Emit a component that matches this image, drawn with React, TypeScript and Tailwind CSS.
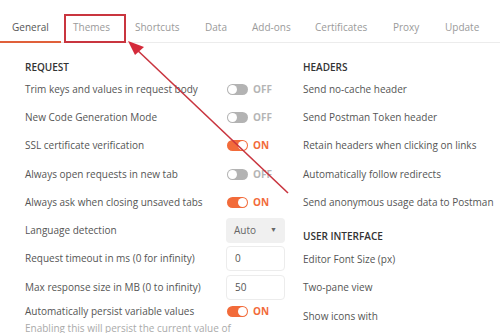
import React from "react";

const tabs: [string, string][] = [
  ["General", "w-[61px]"],
  ["Themes", "w-[62px]"],
  ["Shortcuts", "w-[70px]"],
  ["Data", "w-[47px]"],
  ["Add-ons", "w-[63px]"],
  ["Certificates", "w-[78px]"],
  ["Proxy", "w-[52px]"],
  ["Update", "w-[67px]"],
];

function Toggle({ on }: { on: boolean }) {
  return (
    <div className="flex items-center gap-[5px] pl-px">
      <div
        className={
          on
            ? "w-[21px] h-[11px] rounded-full bg-[#f26b3a] flex items-center justify-end pr-px"
            : "w-[21px] h-[11px] rounded-full bg-[#b3b3b3] flex items-center justify-start pl-px"
        }
      >
        <div className="w-[9px] h-[9px] rounded-full bg-white" />
      </div>
      <span
        className={
          on
            ? "text-[10px] font-bold text-[#f26b3a]"
            : "text-[10px] font-bold text-[#b5b5b5]"
        }
      >
        {on ? "ON" : "OFF"}
      </span>
    </div>
  );
}

function Row({
  label,
  children,
  h = "h-[28.3px]",
}: {
  label: string;
  children?: React.ReactNode;
  h?: string;
}) {
  return (
    <div className={`flex items-center ${h}`}>
      <span className="flex-1 whitespace-nowrap text-[10px] text-[#555]">{label}</span>
      <div className="w-[59px] shrink-0 flex items-center">{children}</div>
    </div>
  );
}

function Heading({ children }: { children: React.ReactNode }) {
  return (
    <div className="h-[15px] flex items-center text-[10px] font-semibold text-[#333]">
      {children}
    </div>
  );
}

export default function App() {
  return (
    <div
      className="relative w-[500px] h-[333px] overflow-hidden bg-white"
      style={{ fontFamily: '"Open Sans", sans-serif' }}
    >
      <div className="flex h-[43px] border-b border-[#ececec]">
        {tabs.map(([t, w], i) => (
          <div
            key={t}
            className={
              i === 0
                ? `${w} shrink-0 h-[43px] pt-[20px] leading-[14px] pl-[12px] border-b-2 border-[#e0603a] text-[10px] text-[#555] whitespace-nowrap`
                : `${w} shrink-0 h-[43px] pt-[20px] leading-[14px] pl-[12px] text-[10px] text-[#9a9a9a] whitespace-nowrap`
            }
          >
            {t}
          </div>
        ))}
      </div>

      <div className="flex pt-[17px]">
        <div className="w-[285px] shrink-0 pl-[25px] flex flex-col">
          <Heading>REQUEST</Heading>
          <Row label="Trim keys and values in request body">
            <Toggle on={false} />
          </Row>
          <Row label="New Code Generation Mode">
            <Toggle on={false} />
          </Row>
          <Row label="SSL certificate verification">
            <Toggle on={true} />
          </Row>
          <Row label="Always open requests in new tab">
            <Toggle on={false} />
          </Row>
          <Row label="Always ask when closing unsaved tabs">
            <Toggle on={true} />
          </Row>
          <Row label="Language detection">
            <div className="w-[59px] h-[25px] bg-[#f0f0f0] rounded-sm flex items-center justify-between px-[8px] text-[10px] text-[#666]">
              <span>Auto</span>
              <span className="text-[7px] text-[#666]">▼</span>
            </div>
          </Row>
          <Row label="Request timeout in ms (0 for infinity)">
            <div className="w-[59px] h-[25px] border border-[#ececec] rounded-sm flex items-center px-[8px] text-[10px] text-[#555]">
              0
            </div>
          </Row>
          <Row label="Max response size in MB (0 to infinity)">
            <div className="w-[59px] h-[25px] border border-[#ececec] rounded-sm flex items-center px-[8px] text-[10px] text-[#555]">
              50
            </div>
          </Row>
          <Row label="Automatically persist variable values" h="h-[20px]">
            <Toggle on={true} />
          </Row>
          <div className="text-[10px] leading-[14px] text-[#aaa] whitespace-nowrap">
            Enabling this will persist the current value of
          </div>
        </div>

        <div className="pl-[18px] flex flex-col text-[10px] text-[#555] whitespace-nowrap">
          <Heading>HEADERS</Heading>
          <div className="h-[28.3px] flex items-center">Send no-cache header</div>
          <div className="h-[28.3px] flex items-center">Send Postman Token header</div>
          <div className="h-[28.3px] flex items-center">
            Retain headers when clicking on links
          </div>
          <div className="h-[28.3px] flex items-center">Automatically follow redirects</div>
          <div className="h-[28.3px] flex items-center">
            Send anonymous usage data to Postman
          </div>
          <div className="mt-[13px]">
            <Heading>USER INTERFACE</Heading>
          </div>
          <div className="mt-[1px] h-[28.3px] flex items-center">Editor Font Size (px)</div>
          <div className="h-[28.3px] flex items-center">Two-pane view</div>
          <div className="h-[28.3px] flex items-center">Show icons with</div>
        </div>
      </div>

      {/* annotation overlay */}
      <div className="absolute left-[64px] top-[14px] w-[62px] h-[29px] border-2 border-[#c9353f]" />
      <svg className="absolute left-0 top-0" width="500" height="333">
        <line x1="288" y1="193" x2="134" y2="47" stroke="#c9353f" strokeWidth="1.6" />
        <polygon points="128,41 144,47 135,55" fill="#d42a3a" />
      </svg>
    </div>
  );
}
